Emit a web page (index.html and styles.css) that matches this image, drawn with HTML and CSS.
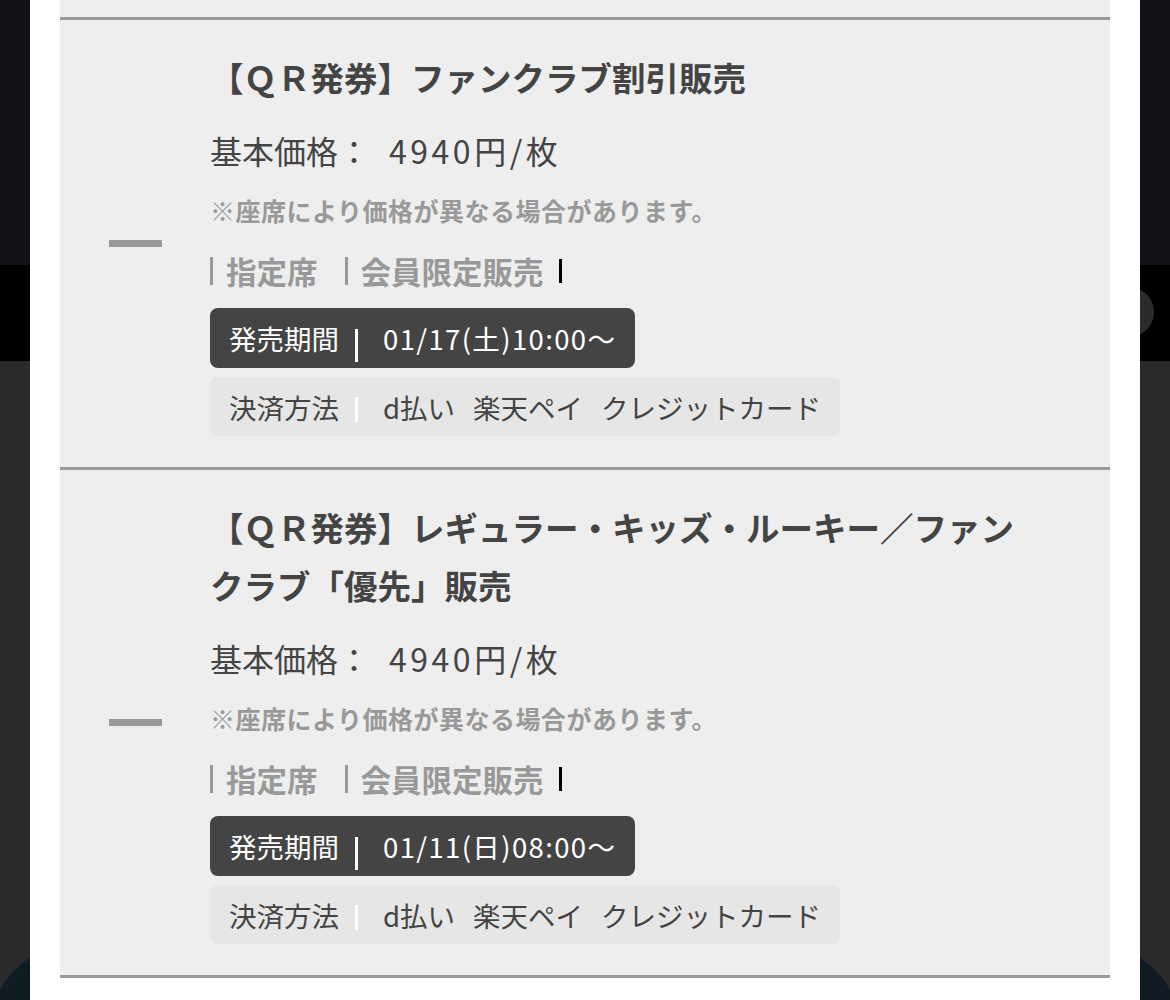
FILE: index.html
```html
<!DOCTYPE html>
<html lang="ja">
<head>
    <meta charset="UTF-8">
    <meta name="viewport" content="width=device-width, initial-scale=1.0">
    <title>チケット販売一覧</title>
    <link rel="stylesheet" href="styles.css">
</head>
<body>

    <!-- page behind the modal -->
    <div class="backdrop">
        <div class="site-header"></div>
        <div class="site-nav">
            <span class="nav-round"></span>
        </div>
        <div class="site-main"></div>
        <span class="float-btn float-left"></span>
        <span class="float-btn float-right"></span>
    </div>

    <div class="modal">
        <ul class="plan-list">
            <li class="plan">
                <div class="plan-toggle"><span class="minus"></span></div>
                <div class="plan-body">
                    <h2 class="plan-title">【ＱＲ発券】ファンクラブ割引販売</h2>
                    <p class="plan-price">基本価格：<span class="price-num">4940円/枚</span></p>
                    <p class="plan-note">※座席により価格が異なる場合があります。</p>
                    <div class="plan-tags">
                        <span class="tag tag-first">指定席</span>
                        <span class="tag">会員限定販売</span>
                        <span class="tag-end"></span>
                    </div>
                    <div class="info-box period">
                        <span class="info-label">発売期間</span>
                        <span class="info-bar"></span>
                        <span class="info-value num">01/17(土)10:00〜</span>
                    </div>
                    <div class="info-box payment">
                        <span class="info-label">決済方法</span>
                        <span class="info-bar"></span>
                        <span class="info-value">
                            <span>d払い</span>
                            <span>楽天ペイ</span>
                            <span>クレジットカード</span>
                        </span>
                    </div>
                </div>
            </li>
            <li class="plan">
                <div class="plan-toggle"><span class="minus"></span></div>
                <div class="plan-body">
                    <h2 class="plan-title">【ＱＲ発券】レギュラー・キッズ・ルーキー／ファンクラブ「優先」販売</h2>
                    <p class="plan-price">基本価格：<span class="price-num">4940円/枚</span></p>
                    <p class="plan-note">※座席により価格が異なる場合があります。</p>
                    <div class="plan-tags">
                        <span class="tag tag-first">指定席</span>
                        <span class="tag">会員限定販売</span>
                        <span class="tag-end"></span>
                    </div>
                    <div class="info-box period">
                        <span class="info-label">発売期間</span>
                        <span class="info-bar"></span>
                        <span class="info-value num">01/11(日)08:00〜</span>
                    </div>
                    <div class="info-box payment">
                        <span class="info-label">決済方法</span>
                        <span class="info-bar"></span>
                        <span class="info-value">
                            <span>d払い</span>
                            <span>楽天ペイ</span>
                            <span>クレジットカード</span>
                        </span>
                    </div>
                </div>
            </li>
        </ul>
    </div>

</body>
</html>
```

FILE: styles.css
```css
body {
    margin: 0;
    height: 1000px;
    overflow: hidden;
    background-color: #2a2a2a;
    font-family: "Noto Sans CJK JP", "Noto Sans", sans-serif;
    color: #444;
}
.backdrop {
    position: relative;
    height: 1000px;
    overflow: hidden;
    display: flex;
    flex-direction: column;
}
.site-header {
    height: 265px;
    background-color: #111216;
}
.site-nav {
    height: 96px;
    background-color: #000;
    display: flex;
    justify-content: flex-end;
    align-items: center;
    padding-right: 16px;
}
.nav-round {
    width: 50px;
    height: 50px;
    border-radius: 50%;
    background-color: #2b2b2b;
    margin-top: -2px;
}
.site-main {
    flex: 1;
    background-color: #2a2a2a;
}
.float-btn {
    position: absolute;
    top: 945px;
    width: 170px;
    height: 170px;
    border-radius: 50%;
    background-color: #101c24;
}
.float-left {
    left: -10px;
}
.float-right {
    left: 1010px;
}

/* modal over the page */
.modal {
    position: fixed;
    top: 0;
    bottom: 0;
    left: 30px;
    right: 30px;
    background-color: #fff;
    padding: 0 30px;
}
.plan-list {
    list-style: none;
    margin: 0;
    padding: 17px 0 0;
    background-color: #eee;
}
.plan {
    display: flex;
    border-top: 3px solid #999;
}
.plan:last-child {
    border-bottom: 3px solid #999;
}
.plan-toggle {
    width: 150px;
    flex-shrink: 0;
    display: flex;
    align-items: center;
    justify-content: center;
}
.minus {
    display: block;
    width: 53px;
    height: 7px;
    background-color: #999;
}
.plan-body {
    flex: 1;
    padding: 28px 80px 31px 0;
}
.plan-title {
    margin: 0;
    font-size: 33.5px;
    line-height: 58px;
    font-weight: bold;
    color: #444;
}
.plan-price {
    margin: 20px 0 0;
    font-size: 32px;
    line-height: 48px;
    color: #444;
}
.price-num {
    margin-left: 19px;
    letter-spacing: 0.11em;
}
.num {
    letter-spacing: 0.05em;
}
.plan-note {
    margin: 18px 0 0;
    font-size: 25px;
    line-height: 36px;
    letter-spacing: 0.5px;
    font-weight: bold;
    color: #999;
}
.plan-tags {
    margin-top: 29px;
    height: 28px;
    display: flex;
    align-items: center;
}
.tag {
    height: 28px;
    line-height: 28px;
    font-size: 30.5px;
    font-weight: bold;
    color: #999;
    border-left: 3px solid #999;
    padding: 0 15px 0 13px;
}
.tag-first {
    margin-right: 12px;
}
.tag-end {
    width: 3px;
    height: 24px;
    background-color: #000;
}
.info-box {
    display: flex;
    align-items: center;
    width: fit-content;
    padding: 0 19px;
    border-radius: 8px;
    font-size: 27.5px;
}
.period {
    margin-top: 23px;
    height: 60px;
    background-color: #444;
    color: #fff;
}
.payment {
    margin-top: 9px;
    height: 59px;
    background-color: #e6e6e6;
    color: #444;
}
.info-bar {
    width: 3px;
    background-color: #fff;
    margin: 0 25px 0 16px;
}
.period .info-bar {
    height: 33px;
    margin-top: 15px;
}
.payment .info-bar {
    height: 25px;
    margin-top: 6px;
}
.info-value {
    display: flex;
    gap: 18px;
}
```
